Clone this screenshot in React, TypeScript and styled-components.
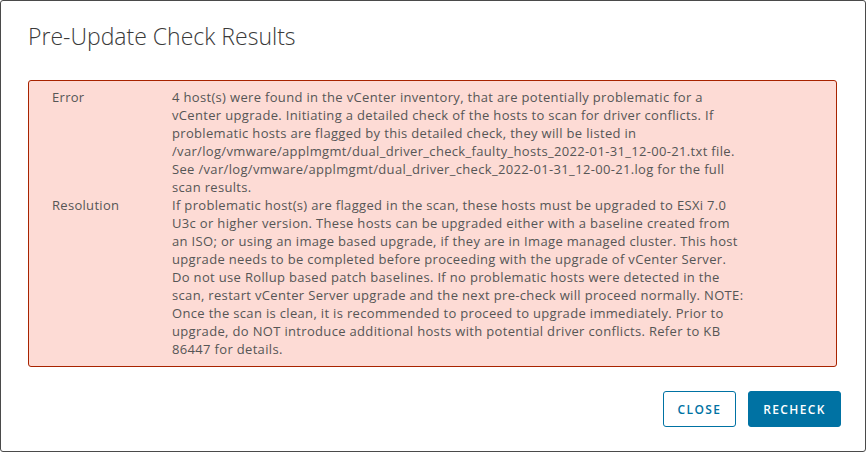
import React from "react";
import styled, { createGlobalStyle } from "styled-components";

const Global = createGlobalStyle`
  html, body { margin: 0; padding: 0; background: #ffffff; }
  body { font-family: "Open Sans", "Noto Sans", sans-serif; }
  * { box-sizing: border-box; }
`;

const Modal = styled.div`
  width: 866px;
  height: 452px;
  border: 1px solid #4a4a4a;
  border-radius: 3px;
  background: #ffffff;
  display: flex;
  flex-direction: column;
  padding: 0 24px 0 27px;
`;

const Title = styled.h2`
  margin: 0;
  padding: 19px 0 0 0;
  height: 79px;
  font-family: "Open Sans", "Noto Sans", sans-serif;
  font-weight: 300;
  font-size: 23px;
  line-height: 32px;
  color: #3a3a3a;
  letter-spacing: 0;
`;

const Alert = styled.div`
  margin-right: 4px;
  border: 1px solid #a82300;
  border-radius: 3px;
  background: #fddbd5;
  padding: 7px 0 8px 23px;
  display: grid;
  grid-template-columns: 120px 1fr;
`;

const Label = styled.div`
  font-size: 13px;
  line-height: 18px;
  letter-spacing: 0.3px;
  color: #565656;
`;

const Body = styled.div`
  font-size: 13px;
  line-height: 18px;
  letter-spacing: 0.33px;
  color: #565656;
`;

const Line = styled.span`
  display: block;
  white-space: nowrap;
`;

const Footer = styled.div`
  margin-top: auto;
  display: flex;
  justify-content: flex-end;
  gap: 12px;
  padding-bottom: 24px;
`;

const Button = styled.button<{ $primary?: boolean }>`
  height: 36px;
  padding: 0 12px;
  border-radius: 3px;
  font-family: "Open Sans", "Noto Sans", sans-serif;
  font-size: 12px;
  font-weight: 600;
  letter-spacing: 1.4px;
  text-transform: uppercase;
  cursor: pointer;
  border: 1px solid #0072a3;
  color: ${(p) => (p.$primary ? "#ffffff" : "#0072a3")};
  background: ${(p) => (p.$primary ? "#0072a3" : "#ffffff")};
  min-width: ${(p) => (p.$primary ? "93px" : "73px")};
`;

const errorLines = [
  "4 host(s) were found in the vCenter inventory, that are potentially problematic for a",
  "vCenter upgrade. Initiating a detailed check of the hosts to scan for driver conflicts. If",
  "problematic hosts are flagged by this detailed check, they will be listed in",
  "/var/log/vmware/applmgmt/dual_driver_check_faulty_hosts_2022-01-31_12-00-21.txt file.",
  "See /var/log/vmware/applmgmt/dual_driver_check_2022-01-31_12-00-21.log for the full",
  "scan results.",
];

const resolutionLines = [
  "If problematic host(s) are flagged in the scan, these hosts must be upgraded to ESXi 7.0",
  "U3c or higher version. These hosts can be upgraded either with a baseline created from",
  "an ISO; or using an image based upgrade, if they are in Image managed cluster. This host",
  "upgrade needs to be completed before proceeding with the upgrade of vCenter Server.",
  "Do not use Rollup based patch baselines. If no problematic hosts were detected in the",
  "scan, restart vCenter Server upgrade and the next pre-check will proceed normally. NOTE:",
  "Once the scan is clean, it is recommended to proceed to upgrade immediately. Prior to",
  "upgrade, do NOT introduce additional hosts with potential driver conflicts. Refer to KB",
  "86447 for details.",
];

export default function App() {
  return (
    <>
      <Global />
      <Modal>
        <Title>Pre-Update Check Results</Title>
        <Alert>
          <Label>Error</Label>
          <Body>
            {errorLines.map((l, i) => (
              <Line key={i}>{l}</Line>
            ))}
          </Body>
          <Label>Resolution</Label>
          <Body>
            {resolutionLines.map((l, i) => (
              <Line key={i}>{l}</Line>
            ))}
          </Body>
        </Alert>
        <Footer>
          <Button>Close</Button>
          <Button $primary>Recheck</Button>
        </Footer>
      </Modal>
    </>
  );
}
